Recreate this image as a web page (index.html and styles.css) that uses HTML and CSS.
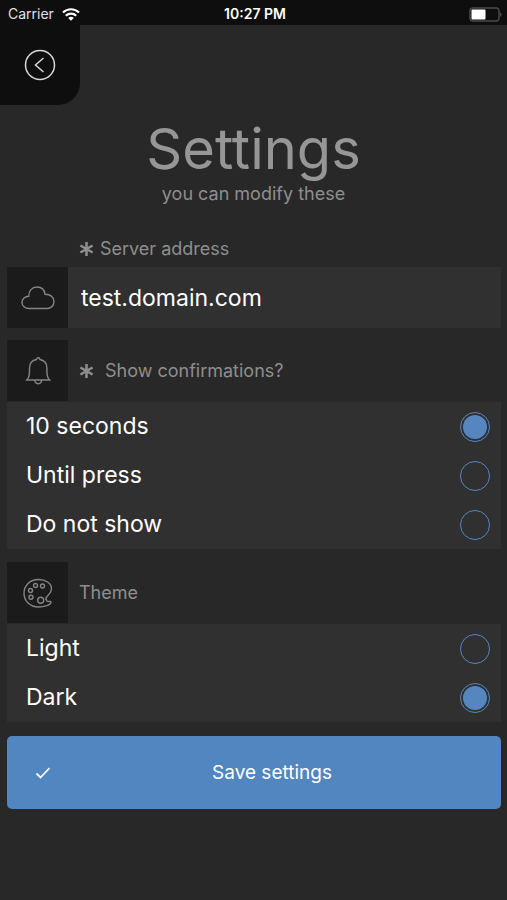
FILE: index.html
```html
<!DOCTYPE html>
<html lang="en">
<head>
    <meta charset="utf-8">
    <meta name="viewport" content="width=device-width, initial-scale=1">
    <title>Settings</title>
    <link rel="stylesheet" href="styles.css">
</head>

<body>

    <div class="status-bar">
        <div class="carrier">
            <span>Carrier</span>
            <svg width="18" height="13" viewBox="0 0 18 13" fill="none" stroke="#fff" stroke-width="2.2">
                <path d="M1 4.5a11.5 11.5 0 0 1 16 0"/>
                <path d="M3.8 7.7a7.4 7.4 0 0 1 10.4 0"/>
                <path d="M9 12.8L6.2 10a4 4 0 0 1 5.6 0z" fill="#fff" stroke="none"/>
            </svg>
        </div>
        <time class="clock">10:27 PM</time>
        <div class="battery">
            <svg width="33" height="15" viewBox="0 0 33 15">
                <rect x="1" y="1" width="29" height="13" rx="3" fill="none" stroke="#4a4a4a" stroke-width="1.4"/>
                <rect x="2.5" y="2.500" width="14" height="10" rx="1" fill="#fff"/>
                <path d="M31.300 5q2.200 2.500 0 5z" fill="#666"/>
            </svg>
        </div>
    </div>

    <button type="button" class="back-button" aria-label="Back">
        <svg width="32" height="32" viewBox="0 0 32 32" fill="none" stroke="#d8d8d8" stroke-width="1.5">
            <circle cx="16" cy="16" r="14.5"/>
            <path d="M19.5 9l-8 7 8 7"/>
        </svg>
    </button>

    <header class="main-header">
        <h1>Settings</h1>
        <p>you can modify these</p>
    </header>

    <form class="settings-form">
        <label class="field-label" for="server">
            <svg class="required" width="15" height="16" viewBox="0 0 15 16"><path d="M7.5 1v14M1.4 4.5l12.2 7M13.6 4.5l-12.2 7"/></svg>
            Server address
        </label>
        <div class="input-row">
            <span class="field-icon">
                <svg width="34" height="34" viewBox="0 0 34 34">
                    <path d="M8 27.500C4 27.500 1 25 1 21.500 1 18 4 15.300 7.800 15.300 7.500 10 11 6 16 6c4.500 0 7.500 3 8 7.200 5-.2 9 2.800 9 7.300 0 4-3 7-7 7z"/>
                </svg>
            </span>
            <input type="text" id="server" value="test.domain.com">
        </div>

        <fieldset>
            <legend>
                <span class="field-icon">
                    <svg width="34" height="34" viewBox="0 0 34 34">
                        <path d="M15.500 5.500a1.700 1.700 0 0 1 3.400 0c4.700.8 7 4.500 7 8.500 0 6.500 0 9 2.700 12H5.800c2.700-3 2.700-5.500 2.700-12 0-4 2.300-7.700 7-8.500zM13.900 26.300c0 4.500 6.600 4.500 6.600 0"/>
                    </svg>
                </span>
                <svg class="required" width="15" height="16" viewBox="0 0 15 16"><path d="M7.5 1v14M1.4 4.5l12.2 7M13.6 4.5l-12.2 7"/></svg>
                Show confirmations?
            </legend>
            <div class="options">
                <label><span>10 seconds</span> <input type="radio" name="confirm" checked></label>
                <label><span>Until press</span> <input type="radio" name="confirm"></label>
                <label><span>Do not show</span> <input type="radio" name="confirm"></label>
            </div>
        </fieldset>

        <fieldset>
            <legend>
                <span class="field-icon">
                    <svg width="34" height="34" viewBox="0 0 34 34">
                        <path d="M30.500 13C30.500 7 24.500 3.500 17.500 3.500 9 3.500 3 9.500 3 17.200 3 25 9 31 17.500 31c5.500 0 12.500-2 12.500-5 0-1.500-2.500.3-4-1-1.500-1.500-1.500-3 0-4.500 1.500-2 4.500-3.500 4.500-7.500z"/>
                        <circle cx="14.500" cy="9.500" r="2"/>
                        <circle cx="21.500" cy="10" r="2"/>
                        <circle cx="9.500" cy="14.500" r="2"/>
                        <circle cx="10" cy="21.300" r="2"/>
                        <circle cx="19.700" cy="24.300" r="3"/>
                    </svg>
                </span>
                Theme
            </legend>
            <div class="options">
                <label><span>Light</span> <input type="radio" name="theme"></label>
                <label><span>Dark</span> <input type="radio" name="theme" checked></label>
            </div>
        </fieldset>

        <button type="button" class="save-button">
            <svg width="16" height="14" viewBox="0 0 16 14" fill="none" stroke="#fff" stroke-width="1.8"><path d="M1.500 7.500l4 4L14.500 2"/></svg>
            <span>Save settings</span>
        </button>
    </form>

</body>
</html>
```
FILE: styles.css
```css
/* Base Styles */
* {
    box-sizing: border-box;
}

body {
    font-family: Inter, "Liberation Sans", sans-serif;
    font-size: 18px;
    line-height: 24px;
    margin: 0;
    background-color: #282828;
    color: #8e8e8e;
}

button, input {
    font: inherit;
    color: white;
    border: none;
}

svg {
    display: block;
    flex: none;
}

/* Status Bar */
.status-bar {
    display: grid;
    grid-template-columns: 1fr auto 1fr;
    align-items: center;
    height: 25px;
    padding: 2px 5px 0 8px;
    background: #0e0e0e;
    color: #e0e0e0;
    font-size: 14px;
}

.carrier {
    display: flex;
    align-items: center;
    gap: 8px;
}

.clock {
    font-weight: 600;
    color: white;
}

.battery {
    justify-self: end;
}

/* Header */
.back-button {
    display: flex;
    align-items: center;
    justify-content: center;
    width: 80px;
    height: 80px;
    padding: 0;
    background: #0e0e0e;
    border-radius: 0 0 22px 0;
}

.main-header {
    text-align: center;
    padding-top: 11px;
}

.main-header h1 {
    margin: 0;
    font-size: 56px;
    font-weight: 400;
    line-height: 66px;
    color: #969696;
}

.main-header p {
    margin: 0;
}

/* Form */
.settings-form {
    padding: 31px 6px 0 7px;
}

.field-label {
    display: flex;
    align-items: center;
    gap: 6px;
    padding: 0 0 6px 72px;
}

.required {
    fill: none;
    stroke: #8e8e8e;
    stroke-width: 2.5;
}

.field-icon {
    display: flex;
    align-items: center;
    justify-content: center;
    flex: none;
    width: 61px;
    height: 61px;
    background: #1b1b1b;
}

.field-icon svg {
    fill: none;
    stroke: #858585;
    stroke-width: 1.4;
}

.input-row {
    display: flex;
}

.input-row input {
    flex: 1;
    min-width: 0;
    padding: 0 13px;
    background: #303030;
    font-size: 23px;
    border-radius: 0;
    outline: none;
}

fieldset {
    min-width: 0;
    margin: 12px 0 0;
    padding: 0;
    border: none;
}

fieldset + fieldset {
    margin-top: 13px;
}

legend {
    display: flex;
    align-items: center;
    gap: 11px;
    width: 100%;
    padding: 0;
}

/* Options */
.options {
    margin-top: 1px;
    background: #303030;
    color: white;
    font-size: 23px;
}

.options label {
    display: flex;
    align-items: center;
    justify-content: space-between;
    height: 49px;
    padding: 0 11px 0 19px;
}

.options span {
    padding-bottom: 2px;
}

.options input {
    appearance: none;
    width: 30px;
    height: 30px;
    margin: 0;
    padding: 2px;
    border: 1px solid #5586c0;
    border-radius: 50%;
}

.options input:checked {
    background: #5586c0 content-box;
}

/* Save Button */
.save-button {
    display: grid;
    grid-template-columns: 1fr auto 1fr;
    align-items: center;
    width: 100%;
    height: 73px;
    margin-top: 14px;
    padding: 0 0 0 28px;
    background: #5286c0;
    border-radius: 5px;
    font-size: 19px;
}

.save-button span {
    padding-left: 8px;
}
```
